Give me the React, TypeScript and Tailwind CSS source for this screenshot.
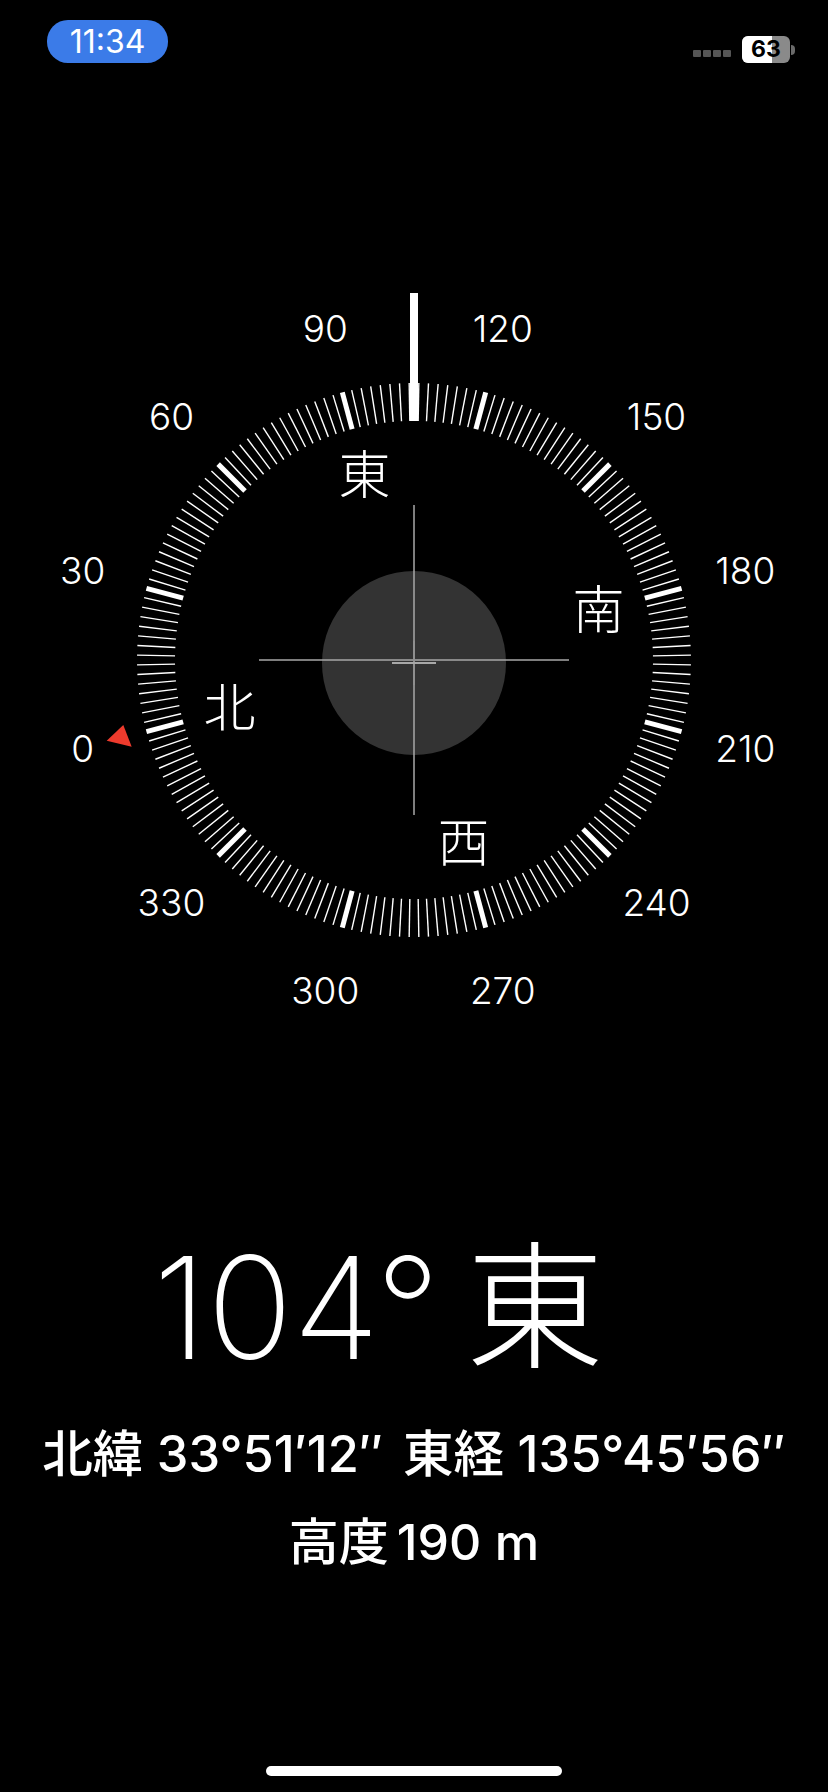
const CX = 380;
const CY = 380;

// the dial is turned so that the heading sits under the top needle
const ROTATION = -105;

const toXY = (deg: number, r: number) => {
  const a = ((deg + ROTATION - 90) * Math.PI) / 180;
  return { x: CX + r * Math.cos(a), y: CY + r * Math.sin(a) };
};

const ticks = Array.from({ length: 180 }, (_, i) => i * 2);
const degreeLabels = [0, 30, 60, 90, 120, 150, 180, 210, 240, 270, 300, 330];
const cardinals = [
  { deg: 0, label: '北' },
  { deg: 90, label: '東' },
  { deg: 180, label: '南' },
  { deg: 270, label: '西' },
];

function StatusBar() {
  return (
    <div className="flex h-[80px] items-start justify-between pl-[47px] pr-[33px] pt-[20px]">
      <div className="flex h-[43px] w-[121px] items-center justify-center rounded-[21px] bg-[#3b7be8] text-[32px] text-white">
        11:34
      </div>
      <div className="mt-[16px] flex items-center">
        <div className="mt-[7px] flex gap-[2px]">
          <div className="h-[7px] w-[8px] rounded-[1px] bg-[#555555]" />
          <div className="h-[7px] w-[8px] rounded-[1px] bg-[#555555]" />
          <div className="h-[7px] w-[8px] rounded-[1px] bg-[#555555]" />
          <div className="h-[7px] w-[8px] rounded-[1px] bg-[#555555]" />
        </div>
        <div className="relative ml-[11px] flex h-[27px] w-[48px] items-center justify-center overflow-hidden rounded-[6px] bg-[#8a8a8a]">
          <div className="absolute inset-y-0 left-0 w-[30px] bg-white" />
          <span className="relative text-[23px] font-bold leading-none text-black">63</span>
        </div>
        <div className="ml-[1px] h-[10px] w-[4px] rounded-r-full bg-[#6a6a6a]" />
      </div>
    </div>
  );
}

function Compass() {
  return (
    <div className="relative mx-auto mt-[200px] h-[760px] w-[760px] shrink-0">
      <svg className="absolute inset-0" width="760" height="760" viewBox="0 0 760 760">
        {ticks.map((deg) => {
          const major = deg % 30 === 0;
          const a = toXY(deg, 277);
          const b = toXY(deg, 239);
          return (
            <line
              key={deg}
              x1={a.x}
              y1={a.y}
              x2={b.x}
              y2={b.y}
              stroke="#ffffff"
              strokeWidth={major ? 5 : 1.4}
            />
          );
        })}
        <rect x="376" y="13" width="8" height="128" fill="#ffffff" />
        <circle cx="380" cy="383" r="92" fill="#333333" />
        <path d="M379.25 225h1.5v310h-1.5z" fill="#a8a8a8" />
        <path d="M225 379.25h310v1.5h-310z" fill="#a8a8a8" />
        <path d="M379 361h2v44h-2z" fill="#8f8f8f" />
        <path d="M358 382h44v2h-44z" fill="#a8a8a8" />
        <polygon points="72.7,460.7 89.3,445 97.7,466.7" fill="#ee3b2d" />
      </svg>
      {degreeLabels.map((deg) => {
        const p = toXY(deg, 343);
        return (
          <span
            key={deg}
            className="absolute -translate-x-1/2 -translate-y-1/2 text-[37px] font-[350] leading-none text-white"
            style={{ left: p.x, top: p.y - 1 }}
          >
            {deg}
          </span>
        );
      })}
      {cardinals.map((c) => {
        const p = toXY(c.deg, 191);
        return (
          <span
            key={c.label}
            className="absolute -translate-x-1/2 -translate-y-1/2 text-[52px] font-light leading-none text-white"
            style={{ left: p.x, top: p.y }}
          >
            {c.label}
          </span>
        );
      })}
    </div>
  );
}

function Readout() {
  return (
    <div className="mt-[192px] flex flex-col items-center text-white">
      <div className="flex h-[150px] items-center pr-[71px] text-[142px] font-extralight leading-none">
        <span>104°</span>
        <span className="ml-[26px] text-[138px] font-extralight">東</span>
      </div>
      <div className="mt-[48px] flex h-[48px] items-center gap-[20px] text-[50.5px] font-medium leading-none">
        <span>北緯 33°51′12″</span>
        <span>東経 135°45′56″</span>
      </div>
      <div className="mt-[40px] flex h-[48px] items-center gap-[8px] text-[50px] font-medium leading-none">
        <span>高度</span>
        <span>190 m</span>
      </div>
    </div>
  );
}

export default function App() {
  return (
    <div className="relative flex h-[1792px] w-[828px] flex-col overflow-hidden bg-black font-['Inter','Noto_Sans_CJK_JP',sans-serif]">
      <StatusBar />
      <Compass />
      <Readout />
      <div className="mx-auto mt-auto mb-[16px] h-[10px] w-[296px] rounded-full bg-white" />
    </div>
  );
}
